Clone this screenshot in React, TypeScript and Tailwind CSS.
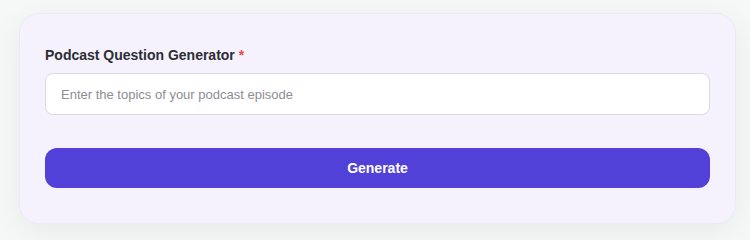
export default function App() {
  return (
    <div
      className="h-[240px] w-[750px] overflow-hidden bg-[#f6f7f7] pl-[19px] pt-[13px]"
      style={{ fontFamily: '"Liberation Sans", Arial, sans-serif' }}
    >
      <div className="flex h-[211px] w-[717px] flex-col rounded-[20px] border border-[#eceaf5] bg-[#f5f2fe] px-[25px] pt-[32px] shadow-[0_8px_30px_rgba(0,0,0,0.06)]">
        <label className="text-[14px] font-bold leading-[18px] text-[#2d2d33]">
          Podcast Question Generator <span className="text-[#e5484d]">*</span>
        </label>
        <input
          type="text"
          placeholder="Enter the topics of your podcast episode"
          className="mt-[9px] h-[42px] w-full rounded-[8px] border border-[#dcd8ea] bg-white px-[15px] text-[13px] text-[#333] outline-none placeholder:text-[#8d8d94]"
        />
        <button className="mt-[33px] h-[40px] w-full rounded-[12px] bg-[#5141d9] text-[14px] font-bold text-white">
          Generate
        </button>
      </div>
    </div>
  );
}
